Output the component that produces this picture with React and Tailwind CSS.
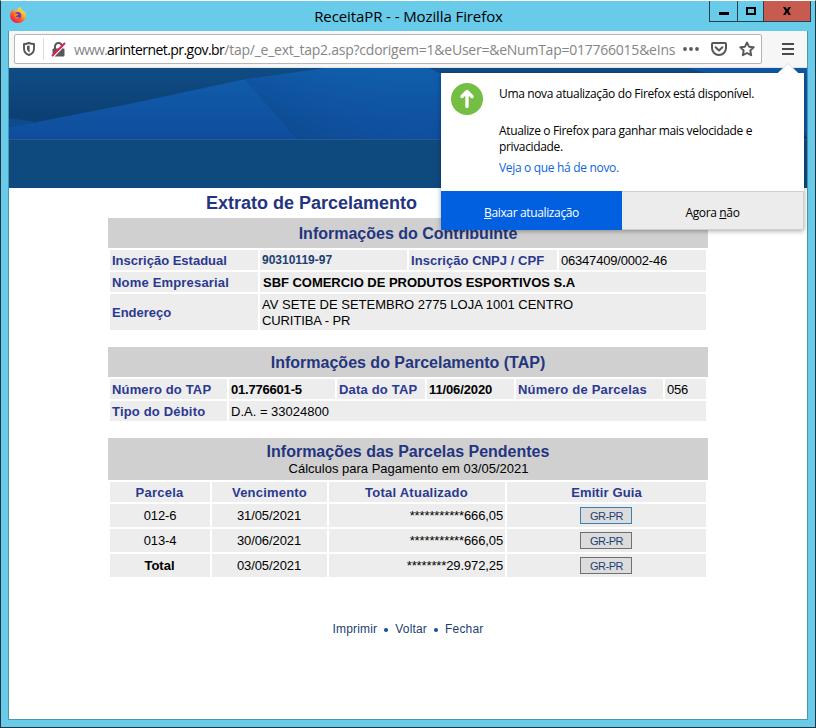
import React from "react";

const ARIAL = "font-['Liberation_Sans',Arial,sans-serif]";

function FirefoxLogo() {
  return (
    <svg width="16" height="16" viewBox="0 0 16 16">
      <defs>
        <linearGradient id="fx" x1="0.85" y1="0.05" x2="0.2" y2="0.95">
          <stop offset="0" stopColor="#fff44f" />
          <stop offset="0.35" stopColor="#ffb02a" />
          <stop offset="0.65" stopColor="#ff5a2c" />
          <stop offset="1" stopColor="#e8185f" />
        </linearGradient>
      </defs>
      <path
        d="M2.2 3.2C2.6 2.6 3 2.2 3.4 2c0 .6.1 1 .4 1.5 1 0 1.7.1 2.400.5C7.300 1.800 8.600.7 10.400 0c0 1.500 1 2 2 3.200.2.300.4.700.5 1 .3-.2.4-.5.4-.8C15.200 5 16 6.600 15.900 8.800 15.700 12.900 12.300 16 8.100 16 3.700 16 .3 12.900.1 8.900 0 6.800.9 4.700 2.200 3.200z"
        fill="url(#fx)"
      />
      <path d="M4.800 6.600c.9-1.400 2.300-1.800 3.600-1.500 2 .5 3.200 2 2.900 3.900-.3 1.900-2 2.800-3.700 2.500-2-.3-3.200-1.800-2.800-4.900z" fill="#6a3fb5" />
      <path d="M4 6.800c1-.5 2-.4 2.900 0 .4.200 1.500.1 1.500.5 0 .500-1.200 1-1.500 1.300-.4.700-.9.800-1.500.8.800 1 2.400 1.300 3.700.4C8.700 12.700 4 12.200 4 6.800z" fill="#ff8a1e" />
    </svg>
  );
}

function TitleBar() {
  return (
    <div className="flex h-[31px] w-full shrink-0 items-start">
      <div className="flex w-[100px] pt-[6px] pl-[9px]">
        <FirefoxLogo />
      </div>
      <div className="flex-1 pt-[3px] pl-[7px] text-center font-['Open_Sans','Noto_Sans',sans-serif] text-[15px] leading-[24px] tracking-[-0.1px] text-black">
        ReceitaPR - - Mozilla Firefox
      </div>
      <div className="mr-[4px] flex h-[21px] w-[102px] border border-t-0 border-[#24404a]">
        <div className="flex w-[28px] justify-center border-r border-[#24404a] pt-[11px]">
          <div className="h-[3px] w-[10px] bg-black" />
        </div>
        <div className="flex w-[26px] justify-center border-r border-[#24404a] pt-[6px]">
          <div className="h-[8px] w-[10px] border-2 border-black" />
        </div>
        <div className="flex flex-1 justify-center bg-[#c75b50] pt-[6px]">
          <svg width="10" height="8" viewBox="0 0 10 8">
            <path d="M1 0h2.500L5 2.400 6.500 0H9L6.500 4 9 8H6.500L5 5.600 3.500 8H1l2.500-4z" fill="#000" />
          </svg>
        </div>
      </div>
    </div>
  );
}

function Toolbar() {
  return (
    <div className="flex h-[37px] shrink-0 items-start border-b border-[#e4e4e6] bg-[#f6f6f7] pt-[3px] pl-[5px]">
      <div className="flex h-[30px] w-[748px] items-center rounded-[2px] border border-[#b5b5b5] bg-white">
        <svg className="ml-[8px] shrink-0" width="12" height="14" viewBox="0 0 12 14">
          <path d="M6 1c1.600.6 3.200.9 5 1v4.500C11 9.800 9.200 12 6 13 2.800 12 1 9.800 1 6.500V2c1.800-.1 3.400-.4 5-1z" fill="none" stroke="#56565a" strokeWidth="1.900" strokeLinejoin="round" />
          <path d="M6 3.500v7C4.200 9.600 3.400 8.400 3.400 6.500V4z" fill="#56565a" transform="translate(.6 0)" />
        </svg>
        <div className="ml-[8px] h-[22px] w-px bg-[#dcdcdc]" />
        <svg className="ml-[7px] shrink-0" width="15" height="15" viewBox="0 0 15 15">
          <rect x="1.500" y="6.500" width="12" height="8" rx="1" fill="#58585c" />
          <path d="M4 7V4.500a3.500 3.500 0 0 1 7 0V7" fill="none" stroke="#58585c" strokeWidth="2" />
          <path d="M.5 13.200 12.500.8" stroke="#fff" strokeWidth="1.500" transform="translate(1.700 1.700)" />
          <path d="M1 14 14 1" stroke="#f0184c" strokeWidth="2" />
        </svg>
        <div className="ml-[8px] w-[602px] whitespace-nowrap pt-[2px] font-['Open_Sans','Noto_Sans',sans-serif] text-[14px] leading-[20px] tracking-[-0.24px] text-[#858585]">
          <span className="tracking-[-0.8px]">www.</span>
          <span className="tracking-[-0.55px] text-black">arinternet.pr.gov.br</span>/tap/_e_ext_tap2.asp?cdorigem=1&amp;eUser=&amp;eNumTap=017766015&amp;eIns
        </div>
        <svg className="ml-[7px] shrink-0" width="16" height="4" viewBox="0 0 16 4">
          <g fill="#5a5a5e">
            <circle cx="2" cy="2" r="1.900" />
            <circle cx="8" cy="2" r="1.900" />
            <circle cx="14" cy="2" r="1.900" />
          </g>
        </svg>
        <svg className="ml-[12px] shrink-0" width="16" height="14" viewBox="0 0 16 14">
          <path d="M2 1h12c.6 0 1 .4 1 1v4a7 7 0 0 1-14 0V2c0-.6.4-1 1-1z" fill="none" stroke="#58585c" strokeWidth="2" />
          <path d="M4.600 5.200 8 8.400l3.400-3.200" fill="none" stroke="#58585c" strokeWidth="2" strokeLinecap="round" strokeLinejoin="round" />
        </svg>
        <svg className="ml-[12px] shrink-0" width="16" height="16" viewBox="0 0 16 16">
          <path d="m8 1.500 2 4.200 4.700.6-3.400 3.200.9 4.700L8 12l-4.200 2.200.9-4.700L1.300 6.300 6 5.700z" fill="none" stroke="#58585c" strokeWidth="1.900" strokeLinejoin="round" />
        </svg>
      </div>
      <div className="ml-[20px] flex flex-col gap-[3px] pt-[9px]">
        <div className="h-[2px] w-[12px] bg-[#4a4a4e]" />
        <div className="h-[2px] w-[12px] bg-[#4a4a4e]" />
        <div className="h-[2px] w-[12px] bg-[#4a4a4e]" />
      </div>
    </div>
  );
}

function Banner() {
  return (
    <svg className="block shrink-0" width="798" height="120" viewBox="0 0 798 120">
      <defs>
        <linearGradient id="sky" x1="0" y1="0" x2="0" y2="1">
          <stop offset="0" stopColor="#105fac" />
          <stop offset="1" stopColor="#0f4d9c" />
        </linearGradient>
        <linearGradient id="deep" x1="0" y1="0" x2="0" y2="1">
          <stop offset="0" stopColor="#0f4c84" />
          <stop offset="1" stopColor="#0c3d70" />
        </linearGradient>
        <linearGradient id="fold" x1="0" y1="0.600" x2="0.700" y2="0.200">
          <stop offset="0" stopColor="#0d4a8c" stopOpacity="0.800" />
          <stop offset="0.500" stopColor="#0f50a0" stopOpacity="0.400" />
          <stop offset="1" stopColor="#0f58a6" stopOpacity="0" />
        </linearGradient>
      </defs>
      <rect width="798" height="120" fill="#0f4a7f" />
      <rect width="798" height="71" fill="url(#sky)" />
      <path d="M0 0H316L232 12 130 34 28 54 0 59z" fill="url(#deep)" />
      <path d="M0 50 28 54 0 59z" fill="#0f4a8c" />
      <path d="M236 12 288 71H450V10Q400 4 330 0H316z" fill="url(#fold)" />
      <path d="M420 0H680Q740 10 798 70V71H700L430 5z" fill="url(#deep)" />
      <path d="M680 0H798V66Q750 20 680 0z" fill="#0f58a6" />
      <rect y="71" width="798" height="1" fill="#285a92" />
    </svg>
  );
}

function Label({ children, className = "" }) {
  return <div className={`flex items-center bg-[#ededed] px-[2px] pt-[2px] font-bold text-[#2b3990] ${className}`}>{children}</div>;
}

function Value({ children, className = "" }) {
  return <div className={`flex items-center bg-[#ededed] text-black ${className}`}>{children}</div>;
}

function SectionTitle({ children }) {
  return <div className="text-center text-[16px] font-bold leading-[18px] text-[#24357f]">{children}</div>;
}

function Contribuinte() {
  return (
    <section className="w-[600px]">
      <div className="h-[30px] bg-[#d0d0d0] pt-[7px]">
        <SectionTitle>Informações do Contribuinte</SectionTitle>
      </div>
      <div className="grid grid-cols-[148px_147px_148px_147px] grid-rows-[20px_20px_36px] gap-[2px] p-[2px]">
        <Label>Inscrição Estadual</Label>
        <Value className="px-[2px] text-[12px] font-bold"><span className="text-[#1c3f73]">90310119-97</span></Value>
        <Label className="tracking-[0.05px]">Inscrição CNPJ / CPF</Label>
        <Value className="px-[2px] pt-[2px] tracking-[-0.2px]">06347409/0002-46</Value>
        <Label className="tracking-[0.18px]">Nome Empresarial</Label>
        <Value className="col-span-3 pt-[2px] pl-[3px] font-bold tracking-[-0.03px]">SBF COMERCIO DE PRODUTOS ESPORTIVOS S.A</Value>
        <Label>Endereço</Label>
        <Value className="col-span-3 px-[2px] pt-[2px] leading-[16px]">
          <span>
            AV SETE DE SETEMBRO 2775 LOJA 1001 CENTRO
            <br />
            <span className="tracking-[-0.1px]">CURITIBA - PR</span>
          </span>
        </Value>
      </div>
    </section>
  );
}

function Parcelamento() {
  return (
    <section className="mt-[15px] w-[600px]">
      <div className="h-[30px] bg-[#d0d0d0] pt-[7px]">
        <SectionTitle>Informações do Parcelamento (TAP)</SectionTitle>
      </div>
      <div className="grid grid-cols-[117px_106px_88px_87px_147px_41px] grid-rows-[20px_20px] gap-[2px] p-[2px]">
        <Label className="tracking-[0.15px]">Número do TAP</Label>
        <Value className="px-[2px] pt-[2px] font-bold tracking-[-0.2px]">01.776601-5</Value>
        <Label className="tracking-[0.18px]">Data do TAP</Label>
        <Value className="px-[2px] pt-[2px] font-bold tracking-[-0.12px]">11/06/2020</Value>
        <Label className="tracking-[0.22px]">Número de Parcelas</Label>
        <Value className="px-[2px] pt-[2px] tracking-[-0.2px]">056</Value>
        <Label className="tracking-[0.18px]">Tipo do Débito</Label>
        <Value className="col-span-5 px-[2px] pt-[2px]">D.A. = 33024800</Value>
      </div>
    </section>
  );
}

const parcelas = [
  { parcela: "012-6", vencimento: "31/05/2021", total: "***********666,05", focus: true },
  { parcela: "013-4", vencimento: "30/06/2021", total: "***********666,05" },
  { parcela: "Total", vencimento: "03/05/2021", total: "********29.972,25", bold: true },
];

function Pendentes() {
  return (
    <section className="mt-[15px] w-[600px]">
      <div className="h-[42px] bg-[#d0d0d0] pt-[5px]">
        <SectionTitle>Informações das Parcelas Pendentes</SectionTitle>
        <div className="pl-px text-center leading-[16px] text-black">Cálculos para Pagamento em 03/05/2021</div>
      </div>
      <div className="grid grid-cols-[100px_115px_176px_199px] grid-rows-[20px_23px_23px_23px] gap-[2px] p-[2px]">
        <Label className="justify-center pr-[3px] tracking-[0.25px]">Parcela</Label>
        <Label className="justify-center pr-[2px] tracking-[0.2px]">Vencimento</Label>
        <Label className="justify-center pr-[3px] tracking-[0.25px]">Total Atualizado</Label>
        <Label className="justify-center pr-[2px] tracking-[0.12px]">Emitir Guia</Label>
        {parcelas.map((p) => (
          <React.Fragment key={p.parcela}>
            <Value className={p.bold ? "justify-center pr-[1px] font-bold" : "justify-center tracking-[-0.1px]"}>{p.parcela}</Value>
            <Value className="justify-center pr-[1px] tracking-[-0.1px]">{p.vencimento}</Value>
            <Value className="justify-end pr-[2px] tracking-[-0.12px]">{p.total}</Value>
            <Value className="justify-center pr-[1px]">
              <button
                className={`h-[17px] w-[52px] border bg-[#dcdcdc] pt-px pl-px text-[11px] leading-[15px] tracking-[-0.45px] text-[#1c3f73] ${
                  p.focus ? "border-[#3c7fb1]" : "border-[#707070]"
                }`}
              >
                GR-PR
              </button>
            </Value>
          </React.Fragment>
        ))}
      </div>
    </section>
  );
}

function Dot() {
  return <span className="mt-[2px] h-[4px] w-[4px] rounded-full bg-[#0f4f9e]" />;
}

function UpdatePopup() {
  return (
    <div className="absolute top-[72px] left-[440px] w-[363px] bg-white font-['Open_Sans','Noto_Sans',sans-serif] text-[12px] leading-[16px] text-black shadow-[0_1px_5px_rgba(0,0,0,0.35)]">
      <svg className="absolute top-[-10px] left-[337px]" width="20" height="10" viewBox="0 0 20 10">
        <path d="M0 10 10 .5 20 10z" fill="#fff" />
        <path d="M0 10 10 .5 20 10" fill="none" stroke="#d5d5d5" strokeWidth="0.800" />
      </svg>
      <div className="flex h-[118px] pt-[10px] pl-[10px]">
        <svg width="32" height="32" viewBox="0 0 32 32">
          <circle cx="16" cy="16" r="16" fill="#73be43" />
          <path d="M16 23.500V10M11 13.500 16 8.500l5 5" fill="none" stroke="#fff" strokeWidth="3.400" strokeLinecap="round" strokeLinejoin="round" />
        </svg>
        <div className="ml-[16px] whitespace-nowrap pt-[3px] tracking-[-0.35px]">
          <div>Uma nova atualização do Firefox está disponível.</div>
          <div className="mt-[21px]">
            Atualize o Firefox para ganhar mais velocidade e
            <br />
            privacidade.
          </div>
          <div className="mt-[5px] tracking-[-0.32px] text-[#0a67d8]">Veja o que há de novo.</div>
        </div>
      </div>
      <div className="flex h-[39px] text-center leading-[43px] tracking-[-0.36px]">
        <div className="h-[39px] w-[181px] bg-[#0060df] text-white"><u>B</u>aixar atualização</div>
        <div className="h-[39px] flex-1 border border-l-0 border-[#cfcfcf] bg-[#ececec] leading-[41px]">Agora <u>n</u>ão</div>
      </div>
    </div>
  );
}

export default function App() {
  return (
    <div className={`relative flex h-[728px] w-[816px] flex-col border border-t-white border-[#22343f] bg-[#67cbe9] ${ARIAL} text-[13px]`}>
      <TitleBar />
      <div className="mx-[7px] mt-[-1px] mb-[7px] flex min-h-0 flex-1 flex-col border border-t-0 border-[#4a97a8] bg-white">
        <Toolbar />
        <Banner />
        <main className="flex flex-col items-center">
          <h1 className="mr-[193px] h-[30px] pt-[5px] text-[18px] font-bold leading-[20px] text-[#24357f]">Extrato de Parcelamento</h1>
          <Contribuinte />
          <Parcelamento />
          <Pendentes />
          <div className="mt-[42px] flex items-center gap-[7px] text-[12px] leading-[16px] tracking-[0.18px] text-[#1c3f73]">
            <span>Imprimir</span>
            <Dot />
            <span>Voltar</span>
            <Dot />
            <span>Fechar</span>
          </div>
        </main>
      </div>
      <UpdatePopup />
    </div>
  );
}
